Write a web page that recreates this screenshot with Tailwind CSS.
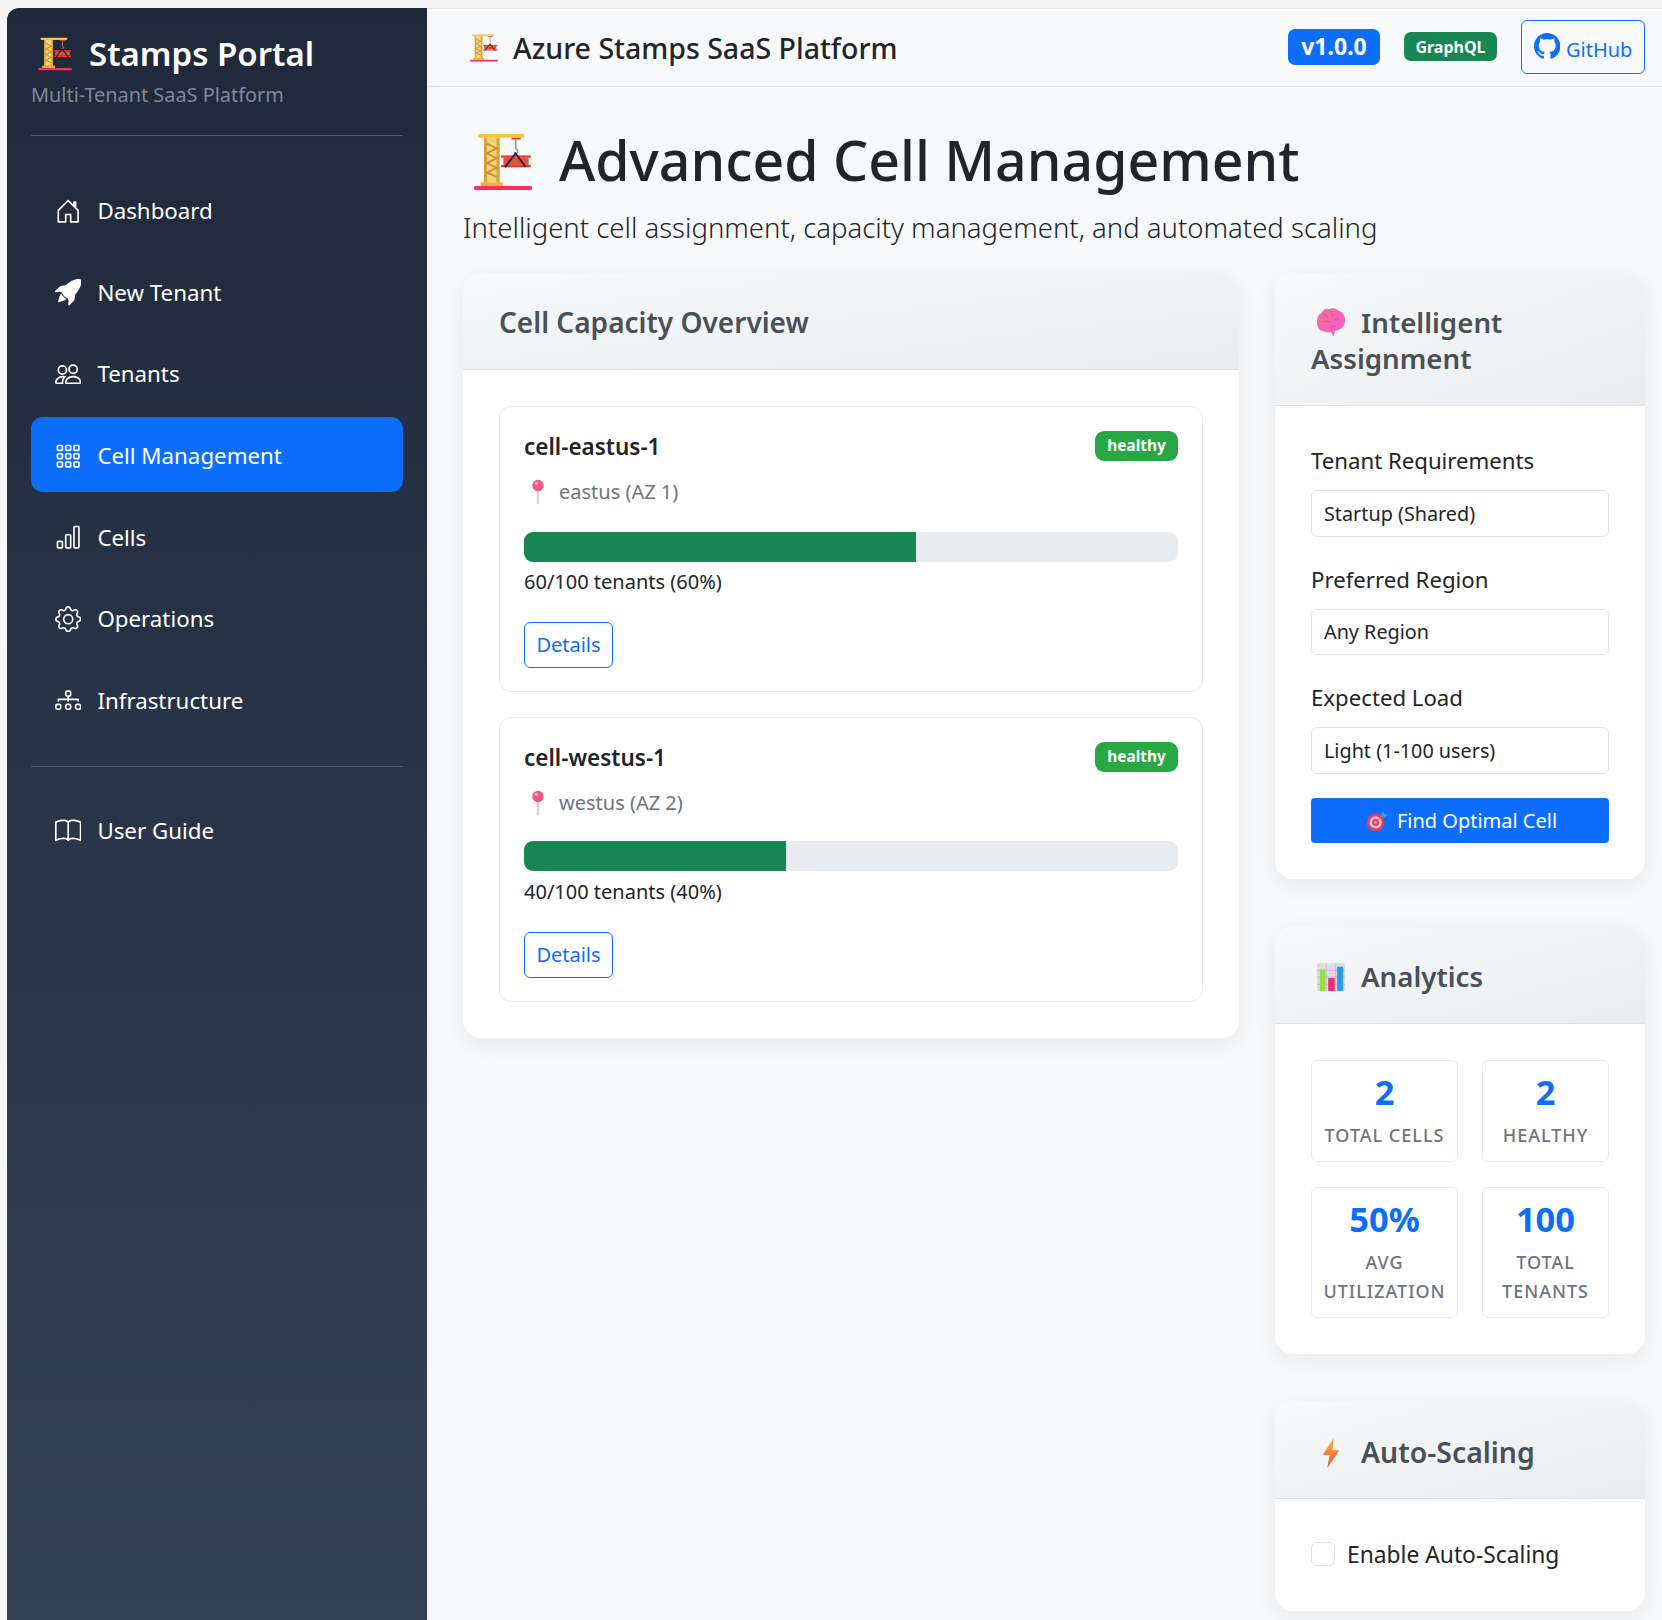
<!DOCTYPE html>
<html lang="en" class="h-[1620px] overflow-hidden">
<head>
    <meta charset="UTF-8">
    <meta name="viewport" content="width=device-width, initial-scale=1.0">
    <title>Advanced Cell Management</title>
    <script src="https://cdn.jsdelivr.net/npm/@tailwindcss/browser@4"></script>
</head>
<body class="h-[1620px] overflow-hidden bg-[#f5f5f5] font-['Noto_Sans',sans-serif] text-[#212529]">
    <!-- shared emoji drawings -->
    <svg class="absolute h-0 w-0">
        <defs>
            <linearGradient id="brainFill" x1="0" y1="0" x2="1" y2="1"><stop offset="0" stop-color="#f0708c"/><stop offset="1" stop-color="#ff5ad8"/></linearGradient>
            <linearGradient id="boltFill" x1="0" y1="0" x2="0" y2="1"><stop offset="0" stop-color="#ffb02e"/><stop offset="1" stop-color="#f0504a"/></linearGradient>
        </defs>
        <symbol id="crane" viewBox="0 0 32 32">
            <rect x="1" y="28.4" width="30" height="2.1" rx="0.8" fill="#f92f60"/>
            <rect x="4.5" y="26.4" width="11.5" height="2" rx="0.6" fill="#e8b23c"/>
            <rect x="6.2" y="3.5" width="8" height="23" fill="#f3d27a"/>
            <rect x="6.2" y="3.5" width="1.5" height="23" fill="#d9a035"/>
            <rect x="12.7" y="3.5" width="1.5" height="23" fill="#d9a035"/>
            <path d="M7.7 6.5l5 2.5-5 2.5 5 2.5-5 2.5 5 2.5-5 2.5 5 2.2" fill="none" stroke="#c98f2c" stroke-width="0.9"/>
            <rect x="3" y="1.5" width="24" height="2" rx="1" fill="#f5c63a"/>
            <rect x="20.4" y="3.5" width="4.7" height="0.9" fill="#e8323c"/>
            <path d="M22.6 4.4v4.2c0 .8 1 1 1 2s-1.6 1.2-1.8.2" fill="none" stroke="#9b9b9b" stroke-width="0.8"/>
            <rect x="15" y="12.6" width="15.3" height="1.2" fill="#f8312f"/>
            <rect x="16.2" y="13.8" width="13" height="3.7" fill="#d3593a"/>
            <rect x="15" y="17.5" width="15.3" height="1.2" fill="#f8312f"/>
            <path d="M17 18.6l5.5-7 5.2 7" fill="none" stroke="#321b41" stroke-width="1"/>
        </symbol>
        <symbol id="brain" viewBox="0 0 32 32">
            <g transform="translate(0,-3) scale(1,1.2)">
                <path d="M1 15c0-4 2-7 5-8 1-3 5-4.500 8-3.500 3-1.500 8-1 10 1.500 4 1 7 4 7 8 0 5-3 8-7 9-1 .5-3 .5-4 1l-1 5-3-4c-3 .5-6 0-8-1-4 0-7-3-7-8.500z" fill="url(#brainFill)"/>
                <path d="M7 9c3-1 5 0 6 2m4-6c-1 2 0 4 2 5m-10 5c2-1 5-1 6 1m5-3c2-1 5-1 6 1m-10 6c1-1 3-2 5-1" fill="none" stroke="#dd4fa0" stroke-width="0.9"/>
            </g>
        </symbol>
        <symbol id="target" viewBox="0 0 32 32">
            <circle cx="14" cy="18" r="13" fill="#e5395f"/>
            <circle cx="14" cy="18" r="9" fill="#e9bcd0"/>
            <circle cx="14" cy="18" r="5" fill="#e5395f"/>
            <circle cx="14" cy="18" r="2" fill="#e9bcd0"/>
            <path d="M14 18L26 6" stroke="#7a8aa0" stroke-width="1.4"/>
            <path d="M22 6l4-4 1 4 4 1-4 4-4-1z" fill="#3ba6de"/>
        </symbol>
        <symbol id="chart" viewBox="0 0 32 32">
            <rect x="1" y="1" width="30" height="30" rx="3" fill="#e0dbe4"/>
            <path d="M11 1v30M21 1v30M1 9h30M1 16h30M1 24h30" stroke="#bdb5c5" stroke-width="0.8"/>
            <rect x="4" y="8" width="6" height="23" rx="1" fill="#8fe04a"/>
            <rect x="13" y="17" width="7" height="14" rx="1" fill="#ee2d74"/>
            <rect x="22.5" y="5" width="6.5" height="26" rx="1" fill="#2a9be8"/>
        </symbol>
        <symbol id="bolt" viewBox="0 0 32 32">
            <path d="M19 0L7 18h7.500l-2.500 14L25 13h-7.500z" fill="url(#boltFill)"/>
        </symbol>
        <symbol id="pin" viewBox="0 0 32 32">
            <rect x="14.5" y="11" width="3" height="20" rx="1" fill="#d9d2e0"/>
            <circle cx="16" cy="8" r="7" fill="#f0568a"/>
            <circle cx="14" cy="5.5" r="2" fill="#fbb0c8"/>
        </symbol>
    </svg>

    <div class="flex h-[1620px] w-[1662px] overflow-hidden pt-2 pl-[7px]">
        <!-- sidebar -->
        <aside class="w-[420px] shrink-0 rounded-tl-[12px] bg-gradient-to-b from-[#1e293b] to-[#334155] px-6 text-white">
            <div class="pt-[28px]">
                <div class="flex h-[36px] items-center">
                    <svg class="ml-[6px] mr-[16px] h-[36px] w-[36px]"><use href="#crane"/></svg>
                    <span class="text-[33px] font-semibold leading-[36px]">Stamps Portal</span>
                </div>
                <p class="mt-[8px] text-[19.9px] leading-[30px] text-[#7f8998]">Multi-Tenant SaaS Platform</p>
            </div>
            <hr class="mt-[25px] border-white/20">

            <nav class="mt-[36px] flex flex-col gap-[6.6px]">
                <a class="flex h-[75px] items-center gap-4 rounded-xl px-6 pt-[3px] text-[22.3px]">
                    <svg class="h-[26.4px] w-[26.4px] shrink-0" viewBox="0 0 16 16" fill="currentColor"><path d="M8.354 1.146a.5.5 0 0 0-.708 0l-6 6A.5.5 0 0 0 1.500 7.500v7a.5.5 0 0 0 .5.5h4.500a.5.5 0 0 0 .5-.5v-4h2v4a.5.5 0 0 0 .5.5H14a.5.5 0 0 0 .5-.5v-7a.5.5 0 0 0-.146-.354L13 5.793V2.500a.5.5 0 0 0-.5-.5h-1a.5.5 0 0 0-.5.5v1.293zM2.500 14V7.707l5.500-5.500 5.500 5.500V14H10v-4a.5.5 0 0 0-.5-.5h-3a.5.5 0 0 0-.5.5v4z"/></svg>
                    Dashboard
                </a>
                <a class="flex h-[75px] items-center gap-4 rounded-xl px-6 pt-[3px] text-[22.3px]">
                    <svg class="h-[26.4px] w-[26.4px] shrink-0" viewBox="0 0 16 16" fill="currentColor"><path d="M12.170 9.530c2.307-2.592 3.278-4.684 3.641-6.218.21-.887.214-1.580.16-2.065a3.600 3.600 0 0 0-.108-.563 2 2 0 0 0-.078-.230V.453c-.073-.164-.168-.234-.352-.295a2 2 0 0 0-.16-.045 4 4 0 0 0-.570-.093c-.490-.044-1.190-.030-2.080.188-1.536.374-3.618 1.343-6.161 3.604l-2.400.238h-.006a2.550 2.550 0 0 0-1.524.734L.150 7.170a.512.512 0 0 0 .433.868l1.896-.271c.280-.040.592.013.955.132.232.076.437.160.655.248l.203.083c.196.816.660 1.580 1.275 2.195.613.614 1.376 1.080 2.191 1.277l.082.202c.089.218.173.424.249.657.118.363.172.676.132.956l-.271 1.900a.512.512 0 0 0 .867.433l2.382-2.386c.410-.410.668-.949.732-1.526z"/><path d="M5.205 10.787a7.600 7.600 0 0 0 1.804 1.352c-1.118 1.007-4.929 2.028-5.054 1.903-.126-.127.737-4.189 1.839-5.180.346.690.837 1.350 1.411 1.925"/></svg>
                    New Tenant
                </a>
                <a class="flex h-[75px] items-center gap-4 rounded-xl px-6 pt-[3px] text-[22.3px]">
                    <svg class="h-[26.4px] w-[26.4px] shrink-0" viewBox="0 0 16 16" fill="currentColor"><path d="M15 14s1 0 1-1-1-4-5-4-5 3-5 4 1 1 1 1zm-7.978-1L7 12.996c.001-.264.167-1.030.760-1.720C8.312 10.629 9.282 10 11 10c1.717 0 2.687.630 3.240 1.276.593.690.758 1.457.760 1.720l-.008.002-.014.002zM11 7a2 2 0 1 0 0-4 2 2 0 0 0 0 4m3-2a3 3 0 1 1-6 0 3 3 0 0 1 6 0M6.936 9.280a6 6 0 0 0-1.230-.247A7 7 0 0 0 5 9c-4 0-5 3-5 4q0 1 1 1h4.216A2.240 2.240 0 0 1 5 13c0-1.010.377-2.042 1.090-2.904.243-.294.526-.569.846-.816M4.920 10A5.500 5.500 0 0 0 4 13H1c0-.26.164-1.030.760-1.724.545-.636 1.492-1.256 3.160-1.275ZM1.500 5.500a3 3 0 1 1 6 0 3 3 0 0 1-6 0m3-2a2 2 0 1 0 0 4 2 2 0 0 0 0-4"/></svg>
                    Tenants
                </a>
                <a class="flex h-[75px] items-center gap-4 rounded-xl bg-[#0d6efd] px-6 pt-[3px] text-[22.3px]">
                    <svg class="h-[26.4px] w-[26.4px] shrink-0" viewBox="0 0 16 16" fill="currentColor"><path d="M4 2v2H2V2zm1 12v-2a1 1 0 0 0-1-1H2a1 1 0 0 0-1 1v2a1 1 0 0 0 1 1h2a1 1 0 0 0 1-1m0-5V7a1 1 0 0 0-1-1H2a1 1 0 0 0-1 1v2a1 1 0 0 0 1 1h2a1 1 0 0 0 1-1m0-5V2a1 1 0 0 0-1-1H2a1 1 0 0 0-1 1v2a1 1 0 0 0 1 1h2a1 1 0 0 0 1-1m5 10v-2a1 1 0 0 0-1-1H7a1 1 0 0 0-1 1v2a1 1 0 0 0 1 1h2a1 1 0 0 0 1-1m0-5V7a1 1 0 0 0-1-1H7a1 1 0 0 0-1 1v2a1 1 0 0 0 1 1h2a1 1 0 0 0 1-1m0-5V2a1 1 0 0 0-1-1H7a1 1 0 0 0-1 1v2a1 1 0 0 0 1 1h2a1 1 0 0 0 1-1M9 2v2H7V2zm5 0v2h-2V2zM4 7v2H2V7zm5 0v2H7V7zm5 0h-2v2h2zM4 12v2H2v-2zm5 0v2H7v-2zm5 0v2h-2v-2zM12 1a1 1 0 0 0-1 1v2a1 1 0 0 0 1 1h2a1 1 0 0 0 1-1V2a1 1 0 0 0-1-1zm-1 6a1 1 0 0 1 1-1h2a1 1 0 0 1 1 1v2a1 1 0 0 1-1 1h-2a1 1 0 0 1-1-1zm1 4a1 1 0 0 0-1 1v2a1 1 0 0 0 1 1h2a1 1 0 0 0 1-1v-2a1 1 0 0 0-1-1z"/></svg>
                    Cell Management
                </a>
                <a class="flex h-[75px] items-center gap-4 rounded-xl px-6 pt-[3px] text-[22.3px]">
                    <svg class="h-[26.4px] w-[26.4px] shrink-0" viewBox="0 0 16 16" fill="currentColor"><path d="M4 11H2v3h2zm5-4H7v7h2zm5-5v12h-2V2zm-2-1a1 1 0 0 0-1 1v12a1 1 0 0 0 1 1h2a1 1 0 0 0 1-1V2a1 1 0 0 0-1-1zM6 7a1 1 0 0 1 1-1h2a1 1 0 0 1 1 1v7a1 1 0 0 1-1 1H7a1 1 0 0 1-1-1zm-5 4a1 1 0 0 1 1-1h2a1 1 0 0 1 1 1v3a1 1 0 0 1-1 1H2a1 1 0 0 1-1-1z"/></svg>
                    Cells
                </a>
                <a class="flex h-[75px] items-center gap-4 rounded-xl px-6 pt-[3px] text-[22.3px]">
                    <svg class="h-[26.4px] w-[26.4px] shrink-0" viewBox="0 0 16 16" fill="currentColor"><path d="M8 4.754a3.246 3.246 0 1 0 0 6.492 3.246 3.246 0 0 0 0-6.492M5.754 8a2.246 2.246 0 1 1 4.492 0 2.246 2.246 0 0 1-4.492 0"/><path d="M9.796 1.343c-.527-1.790-3.065-1.790-3.592 0l-.094.319a.873.873 0 0 1-1.255.520l-.292-.160c-1.640-.892-3.433.902-2.540 2.541l.159.292a.873.873 0 0 1-.520 1.255l-.319.094c-1.790.527-1.790 3.065 0 3.592l.319.094a.873.873 0 0 1 .520 1.255l-.160.292c-.892 1.640.901 3.434 2.541 2.540l.292-.159a.873.873 0 0 1 1.255.520l.094.319c.527 1.790 3.065 1.790 3.592 0l.094-.319a.873.873 0 0 1 1.255-.520l.292.160c1.640.893 3.434-.902 2.540-2.541l-.159-.292a.873.873 0 0 1 .520-1.255l.319-.094c1.790-.527 1.790-3.065 0-3.592l-.319-.094a.873.873 0 0 1-.520-1.255l.160-.292c.893-1.640-.902-3.433-2.541-2.540l-.292.159a.873.873 0 0 1-1.255-.520zm-2.633.283c.246-.835 1.428-.835 1.674 0l.094.319a1.873 1.873 0 0 0 2.693 1.115l.291-.160c.764-.415 1.600.420 1.184 1.185l-.159.292a1.873 1.873 0 0 0 1.116 2.692l.318.094c.835.246.835 1.428 0 1.674l-.319.094a1.873 1.873 0 0 0-1.115 2.693l.160.291c.415.764-.420 1.600-1.185 1.184l-.291-.159a1.873 1.873 0 0 0-2.693 1.116l-.094.318c-.246.835-1.428.835-1.674 0l-.094-.319a1.873 1.873 0 0 0-2.692-1.115l-.292.160c-.764.415-1.600-.420-1.184-1.185l.159-.291A1.873 1.873 0 0 0 1.945 8.930l-.319-.094c-.835-.246-.835-1.428 0-1.674l.319-.094A1.873 1.873 0 0 0 3.060 4.377l-.160-.292c-.415-.764.420-1.600 1.185-1.184l.292.159a1.873 1.873 0 0 0 2.692-1.115z"/></svg>
                    Operations
                </a>
                <a class="flex h-[75px] items-center gap-4 rounded-xl px-6 pt-[3px] text-[22.3px]">
                    <svg class="h-[26.4px] w-[26.4px] shrink-0" viewBox="0 0 16 16" fill="currentColor"><path d="M6 3.500A1.500 1.500 0 0 1 7.500 2h1A1.500 1.500 0 0 1 10 3.500v1A1.500 1.500 0 0 1 8.500 6v1H14a.5.5 0 0 1 .5.5v1a.5.5 0 0 1-1 0V8h-5v.5a.5.5 0 0 1-1 0V8h-5v.5a.5.5 0 0 1-1 0v-1A.5.5 0 0 1 2 7h5.500V6A1.500 1.500 0 0 1 6 4.500zM8.500 5a.5.5 0 0 0 .5-.5v-1a.5.5 0 0 0-.5-.5h-1a.5.5 0 0 0-.5.5v1a.5.5 0 0 0 .5.5zM0 11.500A1.500 1.500 0 0 1 1.500 10h1A1.500 1.500 0 0 1 4 11.500v1A1.500 1.500 0 0 1 2.500 14h-1A1.500 1.500 0 0 1 0 12.500zm1.500-.5a.5.5 0 0 0-.5.5v1a.5.5 0 0 0 .5.5h1a.5.5 0 0 0 .5-.5v-1a.5.5 0 0 0-.5-.5zm4.500.5A1.500 1.500 0 0 1 7.500 10h1a1.500 1.500 0 0 1 1.500 1.500v1A1.500 1.500 0 0 1 8.500 14h-1A1.500 1.500 0 0 1 6 12.500zm1.500-.5a.5.5 0 0 0-.5.5v1a.5.5 0 0 0 .5.5h1a.5.5 0 0 0 .5-.5v-1a.5.5 0 0 0-.5-.5zm4.500.5a1.500 1.500 0 0 1 1.500-1.500h1a1.500 1.500 0 0 1 1.500 1.500v1a1.500 1.500 0 0 1-1.500 1.500h-1a1.500 1.500 0 0 1-1.500-1.500zm1.500-.5a.5.5 0 0 0-.5.5v1a.5.5 0 0 0 .5.5h1a.5.5 0 0 0 .5-.5v-1a.5.5 0 0 0-.5-.5z"/></svg>
                    Infrastructure
                </a>
            </nav>

            <hr class="mt-[29px] border-white/20">

            <a class="mt-[27px] flex h-[75px] items-center gap-4 rounded-xl px-6 text-[22.3px]">
                <svg class="h-[26.4px] w-[26.4px] shrink-0" viewBox="0 0 16 16" fill="currentColor"><path d="M1 2.828c.885-.370 2.154-.769 3.388-.893 1.330-.134 2.458.063 3.112.752v9.746c-.935-.530-2.120-.603-3.213-.493-1.180.120-2.370.461-3.287.811zm7.500-.141c.654-.689 1.782-.886 3.112-.752 1.234.124 2.503.523 3.388.893v9.923c-.918-.350-2.107-.692-3.287-.810-1.094-.111-2.278-.039-3.213.492zM8 1.783C7.015.936 5.587.810 4.287.940c-1.514.153-3.042.672-3.994 1.105A.5.5 0 0 0 0 2.500v11a.5.5 0 0 0 .707.455c.882-.4 2.303-.881 3.680-1.020 1.409-.142 2.590.087 3.223.877a.5.5 0 0 0 .780 0c.633-.790 1.814-1.019 3.222-.877 1.378.139 2.800.620 3.681 1.020A.5.5 0 0 0 16 13.500v-11a.5.5 0 0 0-.293-.455c-.952-.433-2.480-.952-3.994-1.105C10.413.809 8.985.936 8 1.783"/></svg>
                User Guide
            </a>
        </aside>

        <!-- main -->
        <main class="min-w-0 flex-1 bg-[#f8f9fa] shadow-[inset_10px_0_10px_-10px_rgba(0,0,0,0.06)]">
            <header class="flex h-[79px] items-center justify-between border-y border-[#dee2e6] border-t-[#e9e9e9] pl-[42px] pr-[17px]">
                <div class="flex items-center">
                    <svg class="mr-[14px] h-[30px] w-[30px]"><use href="#crane"/></svg>
                    <span class="pt-[2px] text-[28.5px] font-medium">Azure Stamps SaaS Platform</span>
                </div>
                <div class="-mt-[2px] flex items-center">
                    <span class="flex h-[36px] w-[92px] items-center justify-center rounded-[7px] bg-[#0d6efd] text-[23px] font-bold text-white">v1.0.0</span>
                    <span class="ml-[24px] flex h-[29px] w-[93px] items-center justify-center rounded-[7px] bg-[#198754] text-[16px] font-bold text-white">GraphQL</span>
                    <a class="ml-[24px] flex h-[54px] w-[124px] items-center justify-center gap-[6px] rounded-[6px] border border-[#0d6efd] text-[20px] text-[#0d6efd]">
                        <svg class="h-[26.4px] w-[26.4px]" viewBox="0 0 16 16" fill="currentColor"><path d="M8 0C3.580 0 0 3.580 0 8c0 3.540 2.290 6.530 5.470 7.590.4.070.55-.17.55-.38 0-.19-.01-.82-.01-1.490-2.010.37-2.530-.49-2.690-.94-.09-.23-.48-.94-.82-1.130-.28-.15-.68-.52-.01-.53.63-.01 1.080.58 1.230.82.72 1.210 1.870.87 2.330.66.07-.52.28-.87.51-1.070-1.780-.2-3.640-.89-3.640-3.950 0-.87.31-1.590.82-2.150-.08-.2-.36-1.020.08-2.120 0 0 .67-.21 2.200.82.64-.18 1.320-.27 2-.27s1.360.09 2 .27c1.530-1.040 2.200-.82 2.200-.82.44 1.100.16 1.920.08 2.120.51.56.82 1.270.82 2.150 0 3.070-1.870 3.750-3.650 3.950.29.25.54.73.54 1.480 0 1.070-.01 1.930-.01 2.200 0 .21.15.46.55.38A8.010 8.010 0 0 0 16 8c0-4.420-3.580-8-8-8"/></svg>
                        <span class="pt-[6px]">GitHub</span>
                    </a>
                </div>
            </header>

            <div class="pl-[36px] pr-[17px] pt-[38px]">
                <h1 class="flex h-[72px] items-center text-[55.4px] font-medium leading-[72px]">
                    <svg class="ml-[9px] mr-[25px] mt-[2px] h-[62px] w-[62px]"><use href="#crane"/></svg>
                    <span class="-mt-[2px]">Advanced Cell Management</span>
                </h1>
                <p class="mt-[8px] h-[45px] text-[27.5px] font-light leading-[45px]">Intelligent cell assignment, capacity management, and automated scaling</p>

                <div class="mt-[23px] flex items-start gap-[36px]">
                    <!-- capacity overview -->
                    <section class="w-[776px] shrink-0 overflow-hidden rounded-[18px] bg-white shadow-[0_6px_24px_rgba(0,0,0,0.07)]">
                        <div class="border-b border-[#dee2e6] bg-gradient-to-br from-[#f8f9fa] to-[#e9ecef] px-9 pb-[29px] pt-[31px]">
                            <h2 class="text-[28px] font-semibold leading-[36px] text-[#495057]">Cell Capacity Overview</h2>
                        </div>
                        <div class="flex flex-col gap-[25px] p-9">
                            <div class="h-[286px] rounded-[12px] border border-[#e9ecef] px-6 pt-6">
                                <div class="flex h-[30px] items-center justify-between">
                                    <h3 class="pt-[2px] text-[22.5px] font-semibold">cell-eastus-1</h3>
                                    <span class="flex h-[30px] w-[83px] items-center justify-center rounded-[9px] bg-[#28a745] text-[15.4px] font-bold text-white">healthy</span>
                                </div>
                                <div class="mt-[13px] flex h-[36px] items-center text-[20px] text-[#6c757d]">
                                    <svg class="ml-[1px] mr-[8px] h-[26px] w-[26px]"><use href="#pin"/></svg>
                                    eastus (AZ 1)
                                </div>
                                <div class="mt-[22px] h-[30px] overflow-hidden rounded-[9px] bg-[#e9ecef]">
                                    <div class="h-full bg-[#198754]" style="width: 60%"></div>
                                </div>
                                <p class="mt-[2px] h-[36px] text-[20px] leading-[36px]">60/100 tenants (60%)</p>
                                <button class="mt-[22px] h-[46px] w-[89px] rounded-[6px] border border-[#0d6efd] text-[20px] text-[#0d6efd]">Details</button>
                            </div>
                            <div class="h-[285px] rounded-[12px] border border-[#e9ecef] px-6 pt-6">
                                <div class="flex h-[30px] items-center justify-between">
                                    <h3 class="pt-[2px] text-[22.5px] font-semibold">cell-westus-1</h3>
                                    <span class="flex h-[30px] w-[83px] items-center justify-center rounded-[9px] bg-[#28a745] text-[15.4px] font-bold text-white">healthy</span>
                                </div>
                                <div class="mt-[13px] flex h-[36px] items-center text-[20px] text-[#6c757d]">
                                    <svg class="ml-[1px] mr-[8px] h-[26px] w-[26px]"><use href="#pin"/></svg>
                                    westus (AZ 2)
                                </div>
                                <div class="mt-[20px] h-[30px] overflow-hidden rounded-[9px] bg-[#e9ecef]">
                                    <div class="h-full bg-[#198754]" style="width: 40%"></div>
                                </div>
                                <p class="mt-[3px] h-[36px] text-[20px] leading-[36px]">40/100 tenants (40%)</p>
                                <button class="mt-[22px] h-[46px] w-[89px] rounded-[6px] border border-[#0d6efd] text-[20px] text-[#0d6efd]">Details</button>
                            </div>
                        </div>
                    </section>

                    <!-- right column -->
                    <div class="flex w-[370px] shrink-0 flex-col">
                        <section class="overflow-hidden rounded-[18px] bg-white shadow-[0_6px_24px_rgba(0,0,0,0.07)]">
                            <div class="border-b border-[#dee2e6] bg-gradient-to-br from-[#f8f9fa] to-[#e9ecef] px-9 pb-[29px] pt-[31px]">
                                <h2 class="text-[27.7px] font-semibold leading-[36px] text-[#495057]"><svg class="ml-[5px] mr-[15px] inline-block h-[30px] w-[30px] align-[-5px]"><use href="#brain"/></svg>Intelligent Assignment</h2>
                            </div>
                            <div class="px-9 pb-9 pt-[37px]">
                                <label class="block h-[36px] text-[22.2px] leading-[36px]">Tenant Requirements</label>
                                <select class="mt-[11px] block h-[47px] w-full appearance-none rounded-[6px] border border-[#dee2e6] bg-white px-3 pt-[1px] text-[19.8px]"><option>Startup (Shared)</option></select>
                                <label class="mt-[25px] block h-[36px] text-[22.2px] leading-[36px]">Preferred Region</label>
                                <select class="mt-[11px] block h-[46px] w-full appearance-none rounded-[6px] border border-[#dee2e6] bg-white px-3 text-[19.8px]"><option>Any Region</option></select>
                                <label class="mt-[25px] block h-[36px] text-[22.2px] leading-[36px]">Expected Load</label>
                                <select class="mt-[11px] block h-[47px] w-full appearance-none rounded-[6px] border border-[#dee2e6] bg-white px-3 pt-[1px] text-[19.8px]"><option>Light (1-100 users)</option></select>
                                <button class="mt-[24px] flex h-[45px] w-full items-center justify-center rounded-[4px] bg-[#0d6efd] text-[20px] text-white">
                                    <svg class="mr-[9px] ml-[3px] h-[22px] w-[22px]"><use href="#target"/></svg>
                                    Find Optimal Cell
                                </button>
                            </div>
                        </section>

                        <section class="mt-[48px] overflow-hidden rounded-[18px] bg-white shadow-[0_6px_24px_rgba(0,0,0,0.07)]">
                            <div class="border-b border-[#dee2e6] bg-gradient-to-br from-[#f8f9fa] to-[#e9ecef] px-9 pb-[29px] pt-[31px]">
                                <h2 class="text-[27.7px] font-semibold leading-[36px] text-[#495057]"><svg class="ml-[5px] mr-[15px] inline-block h-[30px] w-[30px] align-[-5px]"><use href="#chart"/></svg>Analytics</h2>
                            </div>
                            <div class="grid grid-cols-[147px_127px] grid-rows-[102px_131px] gap-x-6 gap-y-[25px] px-9 pb-[36px] pt-[36px]">
                                <div class="rounded-[6px] border border-[#e9ecef] pt-[9px] text-center">
                                    <div class="text-[34.5px] font-bold leading-[44px] text-[#0d6efd]">2</div>
                                    <div class="mt-[7px] text-[18px] font-medium uppercase leading-[29px] tracking-[1px] text-[#6c757d]">Total Cells</div>
                                </div>
                                <div class="rounded-[6px] border border-[#e9ecef] pt-[9px] text-center">
                                    <div class="text-[34.5px] font-bold leading-[44px] text-[#0d6efd]">2</div>
                                    <div class="mt-[7px] text-[18px] font-medium uppercase leading-[29px] tracking-[1px] text-[#6c757d]">Healthy</div>
                                </div>
                                <div class="rounded-[6px] border border-[#e9ecef] pt-[9px] text-center">
                                    <div class="text-[34.5px] font-bold leading-[44px] text-[#0d6efd]">50%</div>
                                    <div class="mt-[7px] text-[18px] font-medium uppercase leading-[29px] tracking-[1px] text-[#6c757d]">Avg<br>Utilization</div>
                                </div>
                                <div class="rounded-[6px] border border-[#e9ecef] pt-[9px] text-center">
                                    <div class="text-[34.5px] font-bold leading-[44px] text-[#0d6efd]">100</div>
                                    <div class="mt-[7px] text-[18px] font-medium uppercase leading-[29px] tracking-[1px] text-[#6c757d]">Total<br>Tenants</div>
                                </div>
                            </div>
                        </section>

                        <section class="mt-[47px] overflow-hidden rounded-[18px] bg-white shadow-[0_6px_24px_rgba(0,0,0,0.07)]">
                            <div class="border-b border-[#dee2e6] bg-gradient-to-br from-[#f8f9fa] to-[#e9ecef] px-9 pb-[28px] pt-[33px]">
                                <h2 class="text-[28.4px] font-semibold leading-[36px] text-[#495057]"><svg class="ml-[5px] mr-[15px] inline-block h-[30px] w-[30px] align-[-5px]"><use href="#bolt"/></svg>Auto-Scaling</h2>
                            </div>
                            <div class="flex items-center px-9 pb-[44px] pt-[41px]">
                                <input type="checkbox" class="h-[24px] w-[24px] appearance-none rounded-[6px] border border-[#dee2e6] bg-white">
                                <label class="ml-[12px] pt-[3px] text-[22.8px] leading-[24px]">Enable Auto-Scaling</label>
                            </div>
                        </section>
                    </div>
                </div>
            </div>
        </main>
    </div>
</body>
</html>
